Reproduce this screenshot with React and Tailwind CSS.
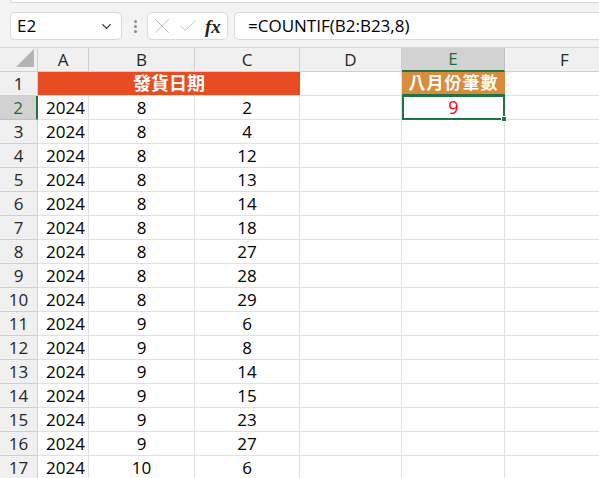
import React from 'react';
import { X, Check, ChevronDown } from 'lucide-react';

const COLS = [
  { key: 'A', w: 'w-[51px]' },
  { key: 'B', w: 'w-[106px]' },
  { key: 'C', w: 'w-[105px]' },
  { key: 'D', w: 'w-[102px]' },
  { key: 'E', w: 'w-[103px]' },
  { key: 'F', w: 'w-[120px]' },
];

const C_VALUES = [2, 4, 12, 13, 14, 18, 27, 28, 29, 6, 8, 14, 15, 23, 27, 6];
const ROWS = C_VALUES.map((c, i) => ({
  n: i + 2,
  a: 2024,
  b: i < 9 ? 8 : i < 15 ? 9 : 10,
  c,
}));

const font = { fontFamily: '"Open Sans", "Noto Sans CJK TC", sans-serif' };

function RowHead({ n, selected }) {
  return (
    <div
      className={
        'w-[38px] shrink-0 h-full flex items-center justify-center border-b border-r ' +
        (selected
          ? 'bg-[#d2d2d2] text-[#1d6b38] border-b-[#c0c0c0] border-r-2 border-r-[#217346]'
          : 'bg-[#f0f0f0] text-[#262626] border-[#cfcfcf]')
      }
    >
      {n}
    </div>
  );
}

export default function App() {
  return (
    <div className="w-[599px] h-[478px] overflow-hidden bg-white text-[17px] text-black" style={font}>
      {/* formula toolbar */}
      <div className="h-[47px] bg-[#f3f3f3] relative">
        <div className="h-[3px] ml-[10px] bg-white border-b border-l border-[#d9d9d9] rounded-bl-md" />
        <div className="flex items-center h-[28px] mt-[9px] pl-[10px]">
          <div className="w-[112px] h-full bg-white border border-[#dadada] rounded-[5px] flex items-center justify-between pl-[6px] pr-[7px]">
            <span>E2</span>
            <ChevronDown className="w-[15px] h-[15px] text-[#333]" strokeWidth={2} />
          </div>
          <div className="w-[4px] ml-[11px] flex flex-col items-center gap-[2px]">
            <span className="w-[3px] h-[3px] rounded-full bg-[#8a8a8a]" />
            <span className="w-[3px] h-[3px] rounded-full bg-[#8a8a8a]" />
            <span className="w-[3px] h-[3px] rounded-full bg-[#8a8a8a]" />
          </div>
          <div className="w-[81px] ml-[10px] h-full bg-white border border-[#dadada] rounded-[5px] flex items-center pl-[1px]">
            <X className="w-[26px] h-[26px] text-[#bababa]" strokeWidth={0.9} />
            <Check className="w-[22px] h-[22px] text-[#bababa] ml-[2px]" strokeWidth={1} />
            <span
              className="italic font-bold text-[19px] text-[#222] ml-[6px] leading-none"
              style={{ fontFamily: '"Liberation Serif", serif' }}
            >
              fx
            </span>
          </div>
          <div className="flex-1 ml-[6px] h-full bg-white border border-[#dadada] rounded-l-[5px] border-r-0 flex items-center pl-[13px]">
            =COUNTIF(B2:B23,8)
          </div>
        </div>
      </div>

      {/* column headers */}
      <div className="flex h-[25px] border-t border-[#d6d6d6]">
        <div className="w-[38px] shrink-0 bg-[#f0f0f0] border-r border-b border-[#cfcfcf] relative">
          <div
            className="absolute right-[3px] bottom-[4px] w-[18px] h-[18px] bg-[#b4b4b4]"
            style={{ clipPath: 'polygon(100% 0, 100% 100%, 0 100%)' }}
          />
        </div>
        {COLS.map((c) => (
          <div
            key={c.key}
            className={
              c.w +
              ' shrink-0 flex items-center justify-center border-r ' +
              (c.key === 'E'
                ? 'bg-[#d2d2d2] text-[#1d6b38] border-r-[#c0c0c0] border-b-2 border-b-[#217346]'
                : 'bg-[#f0f0f0] text-[#262626] border-[#cfcfcf] border-b')
            }
          >
            {c.key}
          </div>
        ))}
      </div>

      {/* row 1 */}
      <div className="flex h-[24px]">
        <RowHead n={1} />
        <div className="w-[262px] shrink-0 bg-[#e84c22] text-white text-[18px] font-bold flex items-center justify-center border-b border-[#e0e0e0]">
          發貨日期
        </div>
        <div className="w-[102px] shrink-0 border-r border-b border-[#e1e1e1]" />
        <div className="w-[103px] shrink-0 bg-[#d98c3c] text-white font-bold flex items-center justify-center tracking-[1px] border-b-2 border-[#217346]">
          八月份筆數
        </div>
        <div className="w-[120px] shrink-0 border-b border-[#e1e1e1]" />
      </div>

      {/* data rows */}
      {ROWS.map((r) => (
        <div key={r.n} className="flex h-[24px]">
          <RowHead n={r.n} selected={r.n === 2} />
          <div className="w-[51px] shrink-0 flex items-center justify-end pr-[3px] border-r border-b border-[#e1e1e1]">
            {r.a}
          </div>
          <div className="w-[106px] shrink-0 flex items-center justify-center border-r border-b border-[#e1e1e1]">
            {r.b}
          </div>
          <div className="w-[105px] shrink-0 flex items-center justify-center border-r border-b border-[#e1e1e1]">
            {r.c}
          </div>
          <div className="w-[102px] shrink-0 border-r border-b border-[#e1e1e1]" />
          {r.n === 2 ? (
            <div className="w-[103px] shrink-0 relative flex items-center justify-center text-[#ff0000] font-medium text-[18px] border-2 border-[#217346] -mt-[1px]">
              9
              <span className="absolute -right-[4px] -bottom-[4px] w-[6px] h-[6px] bg-[#217346] border border-white" />
            </div>
          ) : (
            <div className="w-[103px] shrink-0 border-r border-b border-[#e1e1e1]" />
          )}
          <div className="w-[120px] shrink-0 border-b border-[#e1e1e1]" />
        </div>
      ))}
    </div>
  );
}
